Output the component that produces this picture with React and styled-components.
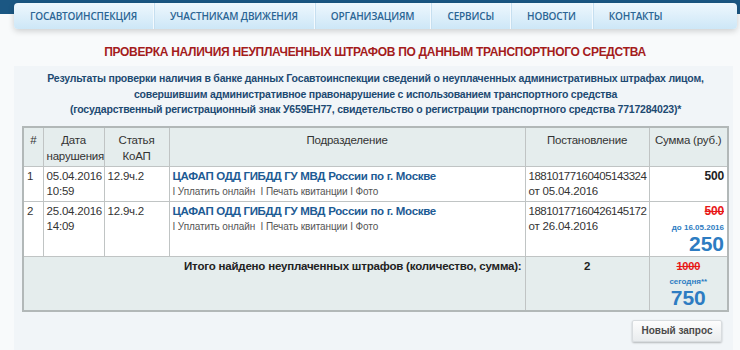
import React from "react";
import styled, { createGlobalStyle } from "styled-components";

const Global = createGlobalStyle`
  html, body { margin: 0; padding: 0; }
  body {
    background: #f8fafb;
    font-family: "Liberation Sans", Arial, sans-serif;
    width: 740px;
    height: 350px;
    overflow: hidden;
  }
`;

const Header = styled.header`
  padding: 3px 3px 0 14px;
  background: linear-gradient(#1b5783 0, #1b5783 14px, transparent 14px);
`;

const Nav = styled.nav`
  display: flex;
  height: 26px;
  border-radius: 4px;
  background: linear-gradient(#eef7fd, #cde7f7);
  box-shadow: 0 2px 6px rgba(0, 0, 0, 0.18);
`;

const NavItem = styled.a`
  display: flex;
  align-items: center;
  padding: 0 16px;
  font-family: "Open Sans", "Noto Sans", sans-serif;
  font-weight: 600;
  font-size: 10px;
  letter-spacing: -0.15px;
  color: #2b6594;
  text-decoration: none;
  border-right: 1px solid ${(p) => (p.$last ? "transparent" : "#f4fafe")};
  box-shadow: ${(p) => (p.$last ? "none" : "1px 0 0 #c6dff0")};
`;

const Title = styled.h1`
  margin: 0;
  padding: 16px 0 0 10px;
  height: 21px;
  text-align: center;
  font-size: 12px;
  letter-spacing: -0.3px;
  line-height: 14px;
  font-weight: bold;
  color: #a41c1c;
`;

const Panel = styled.main`
  margin: 0 7px 0 14px;
  padding: 5px 4px 0 8px;
  background: #f1f5f8;
  height: 279px;
`;

const Intro = styled.p`
  margin: 0 0 8px;
  text-align: center;
  font-size: 10.5px;
  letter-spacing: -0.2px;
  font-weight: bold;
  line-height: 15.5px;
  color: #1d4a72;
`;

const Table = styled.table`
  width: 707px;
  table-layout: fixed;
  border-collapse: collapse;
  border: 2px solid #b2b8b8;
  font-size: 11.5px;
  letter-spacing: -0.2px;
  color: #333;
  background: #fff;
`;

const Th = styled.th`
  box-sizing: border-box;
  background: #e5eded;
  border: 1px solid #c0c4c4;
  font-weight: normal;
  vertical-align: top;
  text-align: center;
  padding: 4px 3px 2px;
  line-height: 16px;
  width: ${(p) => p.$w || "auto"};
`;

const Td = styled.td`
  border: 1px solid #c0c4c4;
  vertical-align: top;
  padding: 2px 3px;
  line-height: 15px;
  text-align: ${(p) => p.$align || "left"};
  background: ${(p) => (p.$foot ? "#e5eded" : "#fff")};
  font-weight: ${(p) => (p.$bold ? "bold" : "normal")};
  color: ${(p) => (p.$bold ? "#222" : "#333")};
  white-space: nowrap;
`;

const DocNo = styled.span`
  letter-spacing: -0.5px;
`;

const Org = styled.a`
  display: block;
  font-weight: bold;
  letter-spacing: -0.3px;
  color: #1d5b94;
  text-decoration: none;
`;

const Actions = styled.div`
  font-size: 10px;
  letter-spacing: -0.1px;
  color: #555;
  white-space: pre;
`;

const Amount = styled.div`
  font-weight: bold;
  font-size: ${(p) => (p.$small ? "11px" : "12px")};
  color: ${(p) => (p.$old ? "#e81818" : "#222")};
  text-decoration: ${(p) => (p.$old ? "line-through" : "none")};
`;

const Note = styled.div`
  font-size: 8px;
  font-weight: bold;
  letter-spacing: 0;
  line-height: 10px;
  color: #2d7cc2;
  margin-top: ${(p) => p.$mt || "2px"};
`;

const Big = styled.div`
  font-size: 21px;
  font-weight: bold;
  letter-spacing: 0;
  line-height: 21px;
  color: #2d7cc2;
`;

const ButtonRow = styled.div`
  display: flex;
  justify-content: flex-end;
  padding: 8px 7px 0 0;
`;

const Button = styled.button`
  width: 90px;
  height: 22px;
  border: 1px solid #d8dcdf;
  border-radius: 2px;
  background: linear-gradient(#fdfdfd, #e9ecee);
  box-shadow: 0 1px 2px rgba(0, 0, 0, 0.25);
  font-family: "Liberation Sans", Arial, sans-serif;
  font-size: 10px;
  font-weight: bold;
  color: #4a4a4a;
  padding: 0;
`;

const rows = [
  {
    n: 1,
    date: "05.04.2016",
    time: "10:59",
    art: "12.9ч.2",
    res: "18810177160405143324",
    resDate: "от 05.04.2016",
    sum: "500",
  },
  {
    n: 2,
    date: "25.04.2016",
    time: "14:09",
    art: "12.9ч.2",
    res: "18810177160426145172",
    resDate: "от 26.04.2016",
    sum: "500",
    discount: { until: "до 16.05.2016", value: "250" },
  },
];

export default function App() {
  const nav = [
    "ГОСАВТОИНСПЕКЦИЯ",
    "УЧАСТНИКАМ ДВИЖЕНИЯ",
    "ОРГАНИЗАЦИЯМ",
    "СЕРВИСЫ",
    "НОВОСТИ",
    "КОНТАКТЫ",
  ];
  return (
    <>
      <Global />
      <Header>
        <Nav>
          {nav.map((t, i) => (
            <NavItem key={t} $last={i === nav.length - 1}>
              {t}
            </NavItem>
          ))}
        </Nav>
      </Header>
      <Title>ПРОВЕРКА НАЛИЧИЯ НЕУПЛАЧЕННЫХ ШТРАФОВ ПО ДАННЫМ ТРАНСПОРТНОГО СРЕДСТВА</Title>
      <Panel>
        <Intro>
          Результаты проверки наличия в банке данных Госавтоинспекции сведений о неуплаченных административных штрафах лицом,
          <br />
          совершившим административное правонарушение с использованием транспортного средства
          <br />
          (государственный регистрационный знак У659ЕН77, свидетельство о регистрации транспортного средства 7717284023)*
        </Intro>
        <Table>
          <thead>
            <tr>
              <Th $w="20px">#</Th>
              <Th $w="61px">
                Дата
                <br />
                нарушения
              </Th>
              <Th $w="65px">
                Статья
                <br />
                КоАП
              </Th>
              <Th>Подразделение</Th>
              <Th $w="124px">Постановление</Th>
              <Th $w="79px">Сумма (руб.)</Th>
            </tr>
          </thead>
          <tbody>
            {rows.map((r) => (
              <tr key={r.n}>
                <Td>{r.n}</Td>
                <Td>
                  {r.date}
                  <br />
                  {r.time}
                </Td>
                <Td>{r.art}</Td>
                <Td>
                  <Org>ЦАФАП ОДД ГИБДД ГУ МВД России по г. Москве</Org>
                  <Actions>{"I Уплатить онлайн  I Печать квитанции I Фото"}</Actions>
                </Td>
                <Td>
                  <DocNo>{r.res}</DocNo>
                  <br />
                  {r.resDate}
                </Td>
                <Td $align="right">
                  <Amount $old={!!r.discount}>{r.sum}</Amount>
                  {r.discount && (
                    <>
                      <Note $mt="4px">{r.discount.until}</Note>
                      <Big>{r.discount.value}</Big>
                    </>
                  )}
                </Td>
              </tr>
            ))}
            <tr>
              <Td $foot $bold colSpan={4} $align="right">
                Итого найдено неуплаченных штрафов (количество, сумма):
              </Td>
              <Td $foot $bold $align="center">2</Td>
              <Td $foot $align="center">
                <Amount $old $small>1000</Amount>
                <Note $mt="3px">сегодня**</Note>
                <Big>750</Big>
              </Td>
            </tr>
          </tbody>
        </Table>
        <ButtonRow>
          <Button>Новый запрос</Button>
        </ButtonRow>
      </Panel>
    </>
  );
}
